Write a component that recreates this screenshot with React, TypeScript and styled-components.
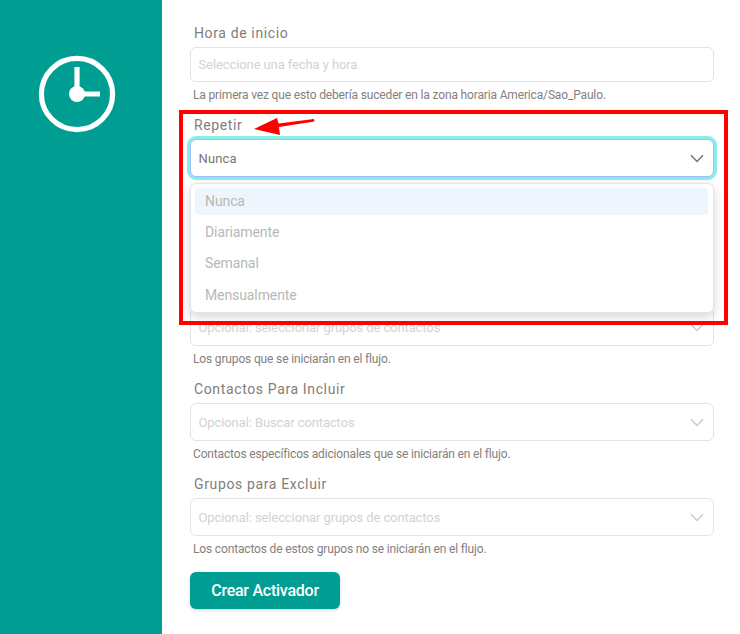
import React from "react";
import styled, { createGlobalStyle } from "styled-components";

const Global = createGlobalStyle`
  html, body { margin: 0; padding: 0; background: #fff; }
  body { font-family: Roboto, "Liberation Sans", sans-serif; }
`;

const Page = styled.div`
  position: relative;
  display: flex;
  width: 740px;
  height: 634px;
  overflow: hidden;
  background: #fff;
`;

const Sidebar = styled.aside`
  flex: 0 0 162px;
  background: #009e92;
  padding: 55px 0 0 38px;
  box-sizing: border-box;
`;

const Form = styled.main`
  width: 524px;
  margin-left: 28px;
  padding-top: 25px;
`;

const Field = styled.div<{ $after?: number }>`
  position: relative;
  margin-bottom: ${(p) => p.$after ?? 15}px;
`;

const Label = styled.div`
  font-size: 14px;
  line-height: 16px;
  letter-spacing: 0.63px;
  color: #827d79;
  padding-left: 4px;
  margin-bottom: 6px;
`;

const Control = styled.div<{ $focus?: boolean; $h?: number }>`
  display: flex;
  align-items: center;
  justify-content: space-between;
  box-sizing: border-box;
  height: ${(p) => p.$h ?? 38}px;
  padding: 0 9px 0 7.5px;
  background: #fff;
  border: 1px solid ${(p) => (p.$focus ? "#a4bafd" : "#e4e4e4")};
  border-radius: 6px;
  box-shadow: ${(p) => (p.$focus ? "0 0 0 3px #8aeee8" : "none")};
  font-size: 13px;
`;

const Placeholder = styled.span`
  color: #d2d2d2;
  letter-spacing: -0.1px;
`;

const Value = styled.span`
  color: #7a7672;
  letter-spacing: 0.15px;
`;

const Help = styled.div`
  font-size: 12px;
  line-height: 14px;
  letter-spacing: -0.155px;
  color: #84807d;
  padding-left: 3px;
  margin-top: 6px;
`;

const Menu = styled.ul`
  position: absolute;
  top: 66px;
  left: 0;
  z-index: 2;
  width: 524px;
  height: 130px;
  box-sizing: border-box;
  margin: 0;
  padding: 4px 5px 4px 4px;
  list-style: none;
  background: #fff;
  border: 1px solid #e4e4e4;
  border-radius: 6px;
  box-shadow: 0 4px 12px rgba(0, 0, 0, 0.16);
`;

const Option = styled.li<{ $active?: boolean }>`
  height: 27px;
  line-height: 27px;
  margin-bottom: 4.2px;
  padding-left: 10px;
  border-radius: 4px;
  font-size: 14px;
  letter-spacing: -0.1px;
  color: #b8b8b8;
  background: ${(p) => (p.$active ? "#eff5fd" : "transparent")};
`;

const Submit = styled.button`
  display: block;
  width: 150px;
  height: 37px;
  margin-top: 16px;
  padding: 0;
  border: 0;
  border-radius: 6px;
  background: #009e92;
  color: #fff;
  font-family: inherit;
  font-size: 16px;
  font-weight: 500;
  letter-spacing: -0.25px;
  box-shadow: 0 1px 3px rgba(0, 0, 0, 0.2);
`;

const Highlight = styled.div`
  position: absolute;
  left: 179px;
  top: 110px;
  width: 549px;
  height: 215px;
  box-sizing: border-box;
  border: 4.5px solid #fe0000;
  z-index: 3;
  pointer-events: none;
`;

const ArrowMark = styled.svg`
  position: absolute;
  left: 250px;
  top: 112px;
  z-index: 3;
`;

const ChevronSvg = styled.svg<{ $dark?: boolean }>`
  flex: none;
  color: ${(p) => (p.$dark ? "#77726e" : "#cbcbcb")};
`;

const Chevron = ({ dark }: { dark?: boolean }) => (
  <ChevronSvg $dark={dark} width="14" height="9" viewBox="0 0 14 9" fill="none">
    <path d="M1 1.2 7 7.4 13 1.2" stroke="currentColor" strokeWidth="1.5" />
  </ChevronSvg>
);

const ClockIcon = () => (
  <svg width="78" height="78" viewBox="0 0 78 78" fill="none">
    <circle cx="39" cy="39" r="35.6" stroke="#fff" strokeWidth="5.2" />
    <circle cx="39" cy="39" r="8" fill="#fff" />
    <path d="M39 12V39H62" stroke="#fff" strokeWidth="5.2" />
  </svg>
);

export default function App() {
  return (
    <Page>
      <Global />
      <Sidebar>
        <ClockIcon />
      </Sidebar>
      <Form>
        <Field>
          <Label>Hora de inicio</Label>
          <Control $h={35}>
            <Placeholder>Seleccione una fecha y hora</Placeholder>
          </Control>
          <Help>La primera vez que esto debería suceder en la zona horaria America/Sao_Paulo.</Help>
        </Field>
        <Field $after={131}>
          <Label>Repetir</Label>
          <Control $focus>
            <Value>Nunca</Value>
            <Chevron dark />
          </Control>
          <Menu>
            <Option $active>Nunca</Option>
            <Option>Diariamente</Option>
            <Option>Semanal</Option>
            <Option>Mensualmente</Option>
          </Menu>
        </Field>
        <Field>
          <Control>
            <Placeholder>Opcional: seleccionar grupos de contactos</Placeholder>
            <Chevron />
          </Control>
          <Help>Los grupos que se iniciarán en el flujo.</Help>
        </Field>
        <Field>
          <Label>Contactos Para Incluir</Label>
          <Control>
            <Placeholder>Opcional: Buscar contactos</Placeholder>
            <Chevron />
          </Control>
          <Help>Contactos específicos adicionales que se iniciarán en el flujo.</Help>
        </Field>
        <Field $after={0}>
          <Label>Grupos para Excluir</Label>
          <Control>
            <Placeholder>Opcional: seleccionar grupos de contactos</Placeholder>
            <Chevron />
          </Control>
          <Help>Los contactos de estos grupos no se iniciarán en el flujo.</Help>
        </Field>
        <Submit>Crear Activador</Submit>
      </Form>
      <Highlight />
      <ArrowMark width="68" height="26" viewBox="0 0 68 26">
        <polygon points="4,17 27,6 28.5,11.5 64,7 64.5,9.5 29,15 30,23" fill="#fe0000" />
      </ArrowMark>
    </Page>
  );
}
